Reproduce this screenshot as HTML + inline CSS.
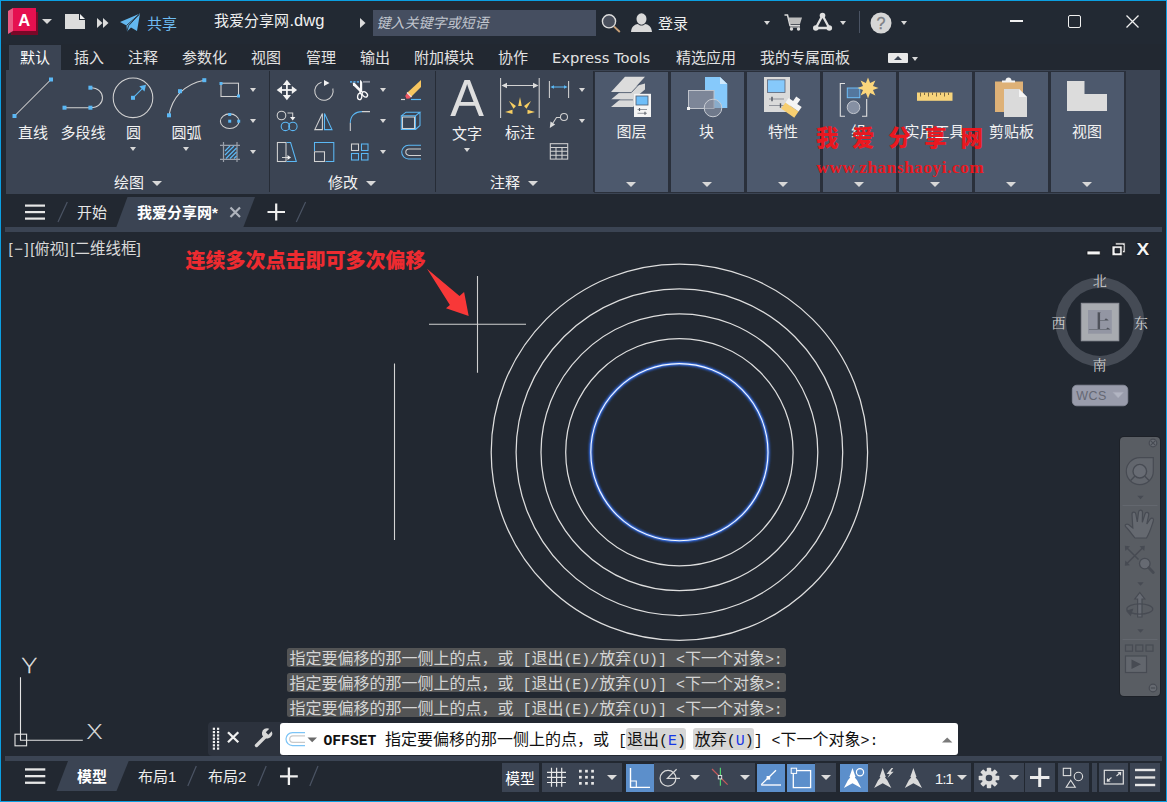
<!DOCTYPE html>
<html lang="zh-CN">
<head>
<meta charset="utf-8">
<title>AutoCAD</title>
<style>
*{box-sizing:border-box;margin:0;padding:0}
html,body{width:1167px;height:802px;overflow:hidden;background:#222831}
body{font-family:"Liberation Sans","Noto Sans CJK SC",sans-serif;color:#e6e6e6;font-size:15px;position:relative}
.abs{position:absolute}
.t{position:absolute;white-space:nowrap;line-height:1}
#win{position:absolute;left:0;top:0;width:1167px;height:802px;border:1px solid #0b9fe2;box-shadow:inset -1px -1px 0 #27242b;background:#222831;overflow:hidden}
#root{position:absolute;left:-1px;top:-1px;width:1167px;height:802px}
svg{position:absolute;overflow:visible}
.tri{position:absolute;width:0;height:0;border-left:4px solid transparent;border-right:4px solid transparent;border-top:4px solid #d8d8d8}
</style>
</head>
<body>
<div id="win"><div id="root">
<!-- TITLE BAR -->
<div class="abs" id="titlebar" style="left:1px;top:1px;width:1164px;height:43px;background:#222933"></div>
<!-- logo -->
<svg style="left:8px;top:8px" width="31" height="28" viewBox="0 0 31 28">
  <polygon points="3,23 30,23 30,4 28,4 28,23" fill="#7d0a2a"/>
  <polygon points="3,23 3,27 30,27 30,4 28,4 28,23" fill="#7a0828"/>
  <polygon points="0,3 5,0 5,23 0,26" fill="#ea5a84"/>
  <rect x="5" y="0" width="23" height="23" fill="#e5104f"/>
  <text x="16.300" y="17.800" font-family="Liberation Sans, sans-serif" font-weight="bold" font-size="16.500" fill="#fff" text-anchor="middle">A</text>
</svg>
<div class="tri" style="left:42px;top:19px;border-left-width:5px;border-right-width:5px;border-top-width:5px"></div>
<!-- doc icon -->
<svg style="left:65px;top:14px" width="20" height="15" viewBox="0 0 20 15">
  <polygon points="0,0 14,0 14,6 20,6 20,15 0,15" fill="#dcdcdc"/>
  <polygon points="15,0 20,5 15,5" fill="#f2f2f2"/>
</svg>
<svg style="left:97px;top:18px" width="12" height="10" viewBox="0 0 12 10">
  <polygon points="0,0 5.5,5 0,10" fill="#dcdcdc"/><polygon points="6,0 11.5,5 6,10" fill="#dcdcdc"/>
</svg>
<!-- share -->
<svg style="left:120px;top:13px" width="21" height="19" viewBox="0 0 21 19">
  <polygon points="0,9 20,0.5 17,18 11,14.5 7,18.5 6.5,12.5" fill="#63b7ef"/>
  <polyline points="6.5,12.500 19,1.500" stroke="#222933" stroke-width="0.9" fill="none"/>
  <polyline points="7,18 8.500,12.800 19.500,1" stroke="#222933" stroke-width="0.9" fill="none"/>
</svg>
<div class="t" style="left:147px;top:16px;font-size:15px;color:#6ebcf2">共享</div>
<div class="t" style="left:214px;top:12px;font-size:15px;color:#f0f0f0">我爱分享网<span style="font-size:16.500px;margin-left:0.500px">.dwg</span></div>
<svg style="left:360px;top:18px" width="6" height="10" viewBox="0 0 6 10"><polygon points="0,0 5.5,5 0,10" fill="#dcdcdc"/></svg>
<!-- search box -->
<div class="abs" style="left:373px;top:10px;width:223px;height:26px;background:#454e60"></div>
<div class="t" style="left:376.500px;top:15.500px;font-size:14px;color:#c0c5ce;font-style:italic">键入关键字或短语</div>
<!-- search icon -->
<svg style="left:600px;top:13px" width="21" height="20" viewBox="0 0 21 20">
  <circle cx="9" cy="8.300" r="6.600" fill="#494f5c" stroke="#dcdcdc" stroke-width="1.400"/>
  <line x1="14" y1="13.500" x2="19.800" y2="19" stroke="#c9a178" stroke-width="1.800"/>
</svg>
<!-- person -->
<svg style="left:631px;top:13px" width="21" height="19" viewBox="0 0 21 19">
  <ellipse cx="10.500" cy="6" rx="5" ry="5.800" fill="#d9d9d9"/>
  <path d="M0,19 C0.500,13 4,11.500 7,11 C9,13 12,13 14,11 C17,11.500 20.500,13 21,19 Z" fill="#d9d9d9"/>
</svg>
<div class="t" style="left:658px;top:16px;font-size:15px;color:#f0f0f0">登录</div>
<div class="tri" style="left:763.700px;top:20.800px;border-left-width:3.500px;border-right-width:3.500px;border-top-width:4.400px"></div>
<!-- cart -->
<svg style="left:784px;top:14px" width="19" height="18" viewBox="0 0 19 18">
  <path d="M0.500,1 H3.500 L6,11.500 H16" stroke="#d9d9d9" stroke-width="1.500" fill="none"/>
  <polygon points="4.500,3.500 18,3.500 16,10 6,10" fill="#bdbdbd"/>
  <circle cx="7.500" cy="15" r="1.700" fill="#d9d9d9"/><circle cx="14.500" cy="15" r="1.700" fill="#d9d9d9"/>
  <line x1="6" y1="13" x2="16" y2="13" stroke="#d9d9d9" stroke-width="1"/>
</svg>
<!-- A triangle -->
<svg style="left:811px;top:12px" width="23" height="20" viewBox="0 0 23 20">
  <polygon points="11.500,3.500 4.800,16 18.300,16" fill="none" stroke="#e0e0e0" stroke-width="2.300" stroke-linejoin="round"/>
  <circle cx="11.500" cy="3.500" r="2.800" fill="#e0e0e0"/><circle cx="4.800" cy="16" r="2.800" fill="#e0e0e0"/><circle cx="18.300" cy="16" r="2.800" fill="#e0e0e0"/>
</svg>
<div class="tri" style="left:840.300px;top:20.800px;border-left-width:3.500px;border-right-width:3.500px;border-top-width:4.400px"></div>
<div class="abs" style="left:859px;top:11px;width:1px;height:22px;background:#4a5363"></div>
<!-- help -->
<svg style="left:870px;top:11.500px" width="22" height="22" viewBox="0 0 22 22">
  <circle cx="11" cy="11" r="10.500" fill="#d6d6d6"/>
  <text x="11" y="16.500" font-family="Liberation Sans, sans-serif" font-size="16" fill="#7c7e85" stroke="#7c7e85" stroke-width="0.300" text-anchor="middle">?</text>
</svg>
<div class="tri" style="left:901.300px;top:20.800px;border-left-width:3.500px;border-right-width:3.500px;border-top-width:4.400px"></div>
<!-- window controls -->
<div class="abs" style="left:1010px;top:20px;width:13px;height:2px;background:#f0f0f0"></div>
<div class="abs" style="left:1068px;top:15px;width:13px;height:13px;border:1.500px solid #f0f0f0;border-radius:2px"></div>
<svg style="left:1126px;top:15px" width="13" height="13" viewBox="0 0 13 13"><path d="M0.500,0.500 L12.500,12.500 M12.500,0.500 L0.500,12.500" stroke="#f0f0f0" stroke-width="1.300"/></svg>
<!-- RIBBON TABS -->
<style>
.rt{position:absolute;top:49px;font-size:15px;line-height:17px;color:#e2e2e2;white-space:nowrap}
.lbl{position:absolute;font-size:15px;line-height:17px;color:#f2f2f2;white-space:nowrap;transform:translateX(-50%)}
.cp{position:absolute;top:72px;width:73px;height:119.700px;background:#4d596d}
.g{stroke:#d2d2d2;fill:none;stroke-width:1.050}
.b{stroke:#5bb8f5;fill:none;stroke-width:1.050}
.h{fill:#5bb8f5}
</style>
<div class="abs" style="left:9px;top:44.600px;width:52px;height:26px;background:#3b4453"></div>
<div class="rt" style="left:20px;color:#fff">默认</div>
<div class="rt" style="left:74px">插入</div>
<div class="rt" style="left:128px">注释</div>
<div class="rt" style="left:182px">参数化</div>
<div class="rt" style="left:251px">视图</div>
<div class="rt" style="left:306px">管理</div>
<div class="rt" style="left:360px">输出</div>
<div class="rt" style="left:414px">附加模块</div>
<div class="rt" style="left:498px">协作</div>
<div class="rt" style="left:552px;font-family:'DejaVu Sans','Liberation Sans',sans-serif;font-size:14.700px">Express Tools</div>
<div class="rt" style="left:676px">精选应用</div>
<div class="rt" style="left:760px">我的专属面板</div>
<div class="abs" style="left:888px;top:53px;width:20px;height:10px;background:#e8e8e8;border-radius:1px"></div>
<div class="abs" style="left:894px;top:56px;width:0;height:0;border-left:4px solid transparent;border-right:4px solid transparent;border-bottom:4px solid #3b4453"></div>
<div class="tri" style="left:912px;top:57px;border-left-width:3.500px;border-right-width:3.500px"></div>

<!-- RIBBON PANEL BG -->
<div class="abs" style="left:6px;top:70px;width:1154px;height:123.500px;background:#3b4453"></div>
<div class="abs" style="left:269px;top:71px;width:1px;height:121px;background:#262c36"></div>
<div class="abs" style="left:435px;top:71px;width:1px;height:121px;background:#262c36"></div>
<div class="abs" style="left:593px;top:71px;width:1px;height:121px;background:#262c36"></div>

<!-- DRAW PANEL -->
<svg style="left:0;top:0" width="270" height="194" viewBox="0 0 270 194">
  <!-- line -->
  <line class="g" x1="14.500" y1="116" x2="51" y2="79.500"/>
  <rect class="h" x="12.500" y="114" width="4" height="4"/><rect class="h" x="49" y="77.500" width="4" height="4"/>
  <!-- polyline -->
  <path class="g" d="M64.500,107.700 H90.400 C106.500,107.700 106.500,87.700 90.400,87.700"/>
  <rect class="h" x="62.500" y="105.700" width="4" height="4"/><rect class="h" x="88.400" y="105.700" width="4" height="4"/><rect class="h" x="88.400" y="85.700" width="4" height="4"/>
  <!-- circle -->
  <circle class="g" cx="133" cy="97.800" r="19.800"/>
  <line class="b" x1="133" y1="97.800" x2="143" y2="87.800" stroke-width="1.400"/>
  <polygon class="h" points="146,84.800 144.500,91.500 139.300,86.300"/>
  <rect class="h" x="131" y="95.800" width="4" height="4"/>
  <!-- arc -->
  <path class="g" d="M169,115.300 C172,98 184,84 204.300,80.200"/>
  <rect class="h" x="167" y="113.300" width="4" height="4"/><rect class="h" x="178" y="89.200" width="4" height="4"/><rect class="h" x="202.300" y="78.200" width="4" height="4"/>
  <!-- rectangle -->
  <rect class="g" x="221" y="83.200" width="17.500" height="13.300"/>
  <rect class="h" x="219.500" y="82" width="3" height="3"/><rect class="h" x="237" y="94.500" width="3" height="3"/>
  <!-- ellipse -->
  <ellipse class="g" cx="229.700" cy="121.200" rx="9.300" ry="7.300"/>
  <rect class="h" x="228.200" y="113" width="3" height="3"/><rect class="h" x="228.200" y="119.700" width="3" height="3"/><rect class="h" x="237.200" y="119.700" width="3" height="3"/>
  <!-- hatch -->
  <path d="M220,145.300 H240 M220,159.300 H240 M223.500,142 V162 M237,142 V162" stroke="#9aa0aa" stroke-width="1.200" fill="none"/>
  <path d="M225,151 L230,146 M225,155 L234,146 M226,158.500 L236.500,148 M230,158.500 L236.500,152 M234,158.500 L236.500,156" stroke="#5bb8f5" stroke-width="1.200" fill="none"/>
</svg>
<div class="lbl" style="left:33px;top:124px">直线</div>
<div class="lbl" style="left:83px;top:124px">多段线</div>
<div class="lbl" style="left:133.500px;top:124px">圆</div>
<div class="lbl" style="left:186.500px;top:124px">圆弧</div>
<div class="tri" style="left:130px;top:147px;border-left-width:3.500px;border-right-width:3.500px"></div>
<div class="tri" style="left:182.500px;top:147px;border-left-width:3.500px;border-right-width:3.500px"></div>
<div class="tri" style="left:250px;top:88px;border-left-width:3.500px;border-right-width:3.500px"></div>
<div class="tri" style="left:250px;top:119px;border-left-width:3.500px;border-right-width:3.500px"></div>
<div class="tri" style="left:250px;top:150px;border-left-width:3.500px;border-right-width:3.500px"></div>
<div class="lbl" style="left:129px;top:174px">绘图</div>
<div class="tri" style="left:151.700px;top:180.700px;border-left-width:5.200px;border-right-width:5.200px;border-top-width:5.500px"></div>
<!-- MODIFY PANEL -->
<svg style="left:0;top:0" width="440" height="194" viewBox="0 0 440 194">
  <!-- move -->
  <g fill="#f2f2f2" stroke="none">
    <rect x="286" y="83" width="1.800" height="14"/><rect x="280" y="89.100" width="14" height="1.800"/>
    <polygon points="286.900,79.800 291,85 282.800,85"/><polygon points="286.900,100.200 291,95 282.800,95"/>
    <polygon points="276.700,90 282,85.900 282,94.100"/><polygon points="297.100,90 291.800,85.900 291.800,94.100"/>
  </g>
  <!-- rotate -->
  <path class="g" d="M321.500,82.200 A9.200,9.200 0 1 0 332.800,88.500" stroke-width="1.300"/>
  <polygon points="324,80 329.500,83 324,86" fill="#f2f2f2"/>
  <!-- copy -->
  <circle class="g" cx="281.500" cy="115.500" r="4.300"/>
  <path class="g" d="M287.500,113 H292.700 V117"/><polygon points="290,117 295.400,117 292.700,120.500" fill="#f2f2f2"/>
  <circle class="b" cx="285.400" cy="126.400" r="4.200"/><circle class="b" cx="292.900" cy="126.400" r="4.200"/>
  <!-- mirror -->
  <polygon class="g" points="314.800,129.600 322.400,129.600 322.400,113.500"/>
  <polygon class="b" points="324.500,113.500 324.500,129.600 332,129.600"/>
  <!-- stretch -->
  <rect class="g" x="277.400" y="142.500" width="8.600" height="19"/>
  <path class="b" d="M286.600,142.500 H290.600 L296.300,161.500 H286.600"/>
  <path class="g" d="M282,157.500 H288"/><polygon points="287.500,155 291,157.500 287.500,160" fill="#f2f2f2"/>
  <!-- scale -->
  <path class="b" d="M325.500,161.500 H333.800 V142.500 H314.500 V151"/>
  <rect class="g" x="314.500" y="151.800" width="10" height="9.700"/>
  <!-- trim -->
  <path d="M350,81.800 H359.200" stroke="#4f9ad2" stroke-width="1.800" stroke-dasharray="2.200,1.200" fill="none"/>
  <path d="M363,81.800 H370" stroke="#8d919c" stroke-width="1.800" fill="none"/>
  <polygon points="360.400,79.800 362.200,82 362.200,91.500 360,91.500 360,81" fill="#fafafa"/>
  <polygon points="352.800,82.800 354.600,82.800 362,90.500 360.500,92.500 353,85.200" fill="#fafafa"/>
  <ellipse cx="359.700" cy="96.500" rx="2.100" ry="3.100" fill="none" stroke="#fafafa" stroke-width="1.300" transform="rotate(8 359.700 96.500)"/>
  <ellipse cx="364.800" cy="94.400" rx="2.100" ry="3.100" fill="none" stroke="#fafafa" stroke-width="1.300" transform="rotate(-48 364.800 94.400)"/>
  <path d="M360.500,91 L359.800,93.500 M361,91 L362.800,92.500" stroke="#fafafa" stroke-width="1.600" fill="none"/>
  <!-- erase -->
  <polygon points="421,80 421,87 411,97 407,93" fill="#f6c55f"/>
  <polygon points="407.500,92.500 411.500,96.500 409.500,98.500 406.500,98.800 405.200,96 " fill="#ee5560"/>
  <path d="M407,92.500 L411.500,97" stroke="#f4e6e0" stroke-width="1.200"/>
  <path d="M401,99.500 H405" stroke="#d6d6d6" stroke-width="1.200"/><path d="M411,99.500 H421" stroke="#5bb8f5" stroke-width="1.200"/>
  <!-- fillet -->
  <path class="b" d="M350.300,123 C350.300,116 355,111.600 362,111.600"/>
  <path class="g" d="M362,111.600 H370 M350.300,123 V131"/>
  <!-- box -->
  <rect class="g" x="402.500" y="117" width="12" height="11.500" stroke="#b8b8b8"/>
  <path class="b" d="M401.300,129.500 V115.800 H415.500 V129.500 Z M401.300,115.800 L406,112.200 H420 L415.500,115.800 M420,112.200 V125.500 L415.500,129.500"/>
  <!-- array -->
  <rect x="351.500" y="144" width="7" height="6.500" class="g" stroke="#b8b8b8"/>
  <rect x="361.500" y="144" width="6.500" height="6.500" class="b"/>
  <rect x="351.500" y="153.500" width="7" height="6.500" class="b"/>
  <rect x="361.500" y="153.500" width="6.500" height="6.500" class="b"/>
  <!-- offset -->
  <path class="b" d="M421,145.300 H408.500 A6.800,6.800 0 0 0 408.500,158.900 H421"/>
  <path class="g" d="M421,149 H409 A3.200,3.200 0 0 0 409,155.400 H421" stroke="#c8c8c8"/>
</svg>
<div class="tri" style="left:380px;top:88px;border-left-width:3.500px;border-right-width:3.500px"></div>
<div class="tri" style="left:380px;top:119px;border-left-width:3.500px;border-right-width:3.500px"></div>
<div class="tri" style="left:380px;top:150px;border-left-width:3.500px;border-right-width:3.500px"></div>
<div class="lbl" style="left:343px;top:174px">修改</div>
<div class="tri" style="left:366px;top:180.700px;border-left-width:5.200px;border-right-width:5.200px;border-top-width:5.500px"></div>
<!-- ANNOTATE PANEL -->
<div class="t" style="left:450.300px;top:72.700px;font-size:51.500px;line-height:51.500px;transform:scaleX(0.98);transform-origin:50% 50%;color:#dedede;font-family:'Liberation Sans',sans-serif">A</div>
<svg style="left:0;top:0" width="600" height="194" viewBox="0 0 600 194">
  <!-- dimension -->
  <path class="g" d="M500.600,78 V118 M539.200,78 V118 M503,85.500 H537"/>
  <polygon points="501.500,85.500 507,82.800 507,88.200" fill="#dcdcdc"/><polygon points="538.500,85.500 533,82.800 533,88.200" fill="#dcdcdc"/>
  <g fill="#f8cf62">
    <polygon points="520,97 521.800,106 518.200,106"/>
    <polygon points="509,101 516,106 513.500,108.800"/>
    <polygon points="531,101 524,106 526.500,108.800"/>
    <polygon points="505,112 512.500,109.800 512.500,114"/>
    <polygon points="535,112 527.500,109.800 527.500,114"/>
  </g>
  <!-- linear dim -->
  <path class="g" d="M549.400,81 V98 M568.600,81 V98"/>
  <path class="b" d="M552,87 H566"/>
  <polygon class="h" points="550.400,87 554,85.200 554,88.800"/><polygon class="h" points="567.600,87 564,85.200 564,88.800"/>
  <!-- leader -->
  <circle class="g" cx="564" cy="117" r="3.500"/>
  <path class="g" d="M560.500,117.500 H556.500 L552,124.500"/>
  <polygon points="549.800,128 550.500,121.500 555.200,124.500" fill="#dcdcdc"/>
  <!-- table -->
  <rect x="550.300" y="143.700" width="17.400" height="15.400" class="g"/>
  <path class="g" d="M550.300,147.500 H567.700 M550.300,151.300 H567.700 M550.300,155.200 H567.700 M556,147.500 V159 M562,147.500 V159"/>
</svg>
<div class="lbl" style="left:467px;top:125px">文字</div>
<div class="lbl" style="left:520px;top:124px">标注</div>
<div class="tri" style="left:463.500px;top:148px;border-left-width:3.500px;border-right-width:3.500px"></div>
<div class="tri" style="left:579px;top:88px;border-left-width:3.500px;border-right-width:3.500px"></div>
<div class="tri" style="left:579px;top:119px;border-left-width:3.500px;border-right-width:3.500px"></div>
<div class="lbl" style="left:505px;top:174px">注释</div>
<div class="tri" style="left:527.700px;top:180.700px;border-left-width:5.200px;border-right-width:5.200px;border-top-width:5.500px"></div>
<!-- COLLAPSED PANELS -->
<div class="abs" style="left:593.500px;top:70.600px;width:532px;height:122.200px;background:#2a303b"></div>
<div class="cp" style="left:595px"></div>
<div class="cp" style="left:671px"></div>
<div class="cp" style="left:747px"></div>
<div class="cp" style="left:823px"></div>
<div class="cp" style="left:899px"></div>
<div class="cp" style="left:975px"></div>
<div class="cp" style="left:1051px"></div>
<svg style="left:0;top:0" width="1167" height="194" viewBox="0 0 1167 194">
  <!-- layers -->
  <polygon points="611,107 623,97 645,97 633,107" fill="#d9d9d9"/>
  <polygon points="611,99.500 623,89.500 645,83.500 645,89.500 633,99.500" fill="#d9d9d9"/>
  <polygon points="611,99.500 633,99.500 633,100.300 611,100.300" fill="#4d596d"/>
  <polygon points="611,92 625,76.800 645,76.800 631,92" fill="#dcdcdc"/>
  <path d="M611,92.600 H631.300 L645,78" stroke="#4d596d" stroke-width="0.900" fill="none"/>
  <rect x="634" y="93.800" width="17" height="23.200" fill="#f4f4f4"/>
  <rect x="636" y="96" width="12" height="9" fill="#6fbef8" stroke="#4d596d" stroke-width="0.800"/>
  <path d="M637.500,109.500 H647 M637.500,113.300 H647" stroke="#7a7f88" stroke-width="0.800"/>
  <path d="M639.500,108 V111 M645,111.800 V114.800" stroke="#5a5f68" stroke-width="1.200"/>
  <!-- block -->
  <polygon points="705,77 720,77 727.300,84 727.300,108 705,108" fill="#86c9fb"/>
  <polygon points="720,77 727.300,84 720,84" fill="#cfe8fb"/>
  <rect x="688.500" y="90.500" width="25.500" height="18" fill="#7d8698" stroke="#bfc3cb" stroke-width="1"/>
  <circle cx="713" cy="108" r="8.800" fill="#8c94a4" fill-opacity="0.550" stroke="#c8ccd3" stroke-width="1"/>
  <rect x="687" y="107" width="3" height="3" fill="#f2f2f2"/>
  <!-- properties -->
  <rect x="764" y="77" width="26" height="35" fill="#dadada"/>
  <rect x="767.500" y="79.800" width="17.500" height="12.700" fill="#86c9fb" stroke="#5b6374" stroke-width="0.800"/>
  <path d="M769,99 H784 M769,105.500 H784" stroke="#7d828c" stroke-width="0.800"/>
  <path d="M772,96.800 V101.200 M780.500,103.300 V107.800" stroke="#4d535e" stroke-width="1.400"/>
  <g transform="rotate(35 792 107)">
    <rect x="784" y="107" width="16" height="7.500" fill="#f7ce70"/>
    <path d="M784,101.500 H789.500 V96 H794.500 V101.500 H800 V107 H784 Z" fill="#f4f4f4"/>
  </g>
  <!-- group -->
  <path d="M845,83.500 H840.300 V116.300 H845 M862,116.300 H866.700 V99" stroke="#e0e0e0" stroke-width="1.100" fill="none"/>
  <rect x="847.300" y="88" width="12.500" height="9.700" fill="#54779e" stroke="#6fbef8" stroke-width="1"/>
  <circle cx="853.500" cy="107.300" r="6.300" fill="#8690a3" stroke="#c2c6ce" stroke-width="1"/>
  <polygon fill="#fbd67c" points="868.0,77.5 870.1,83.0 875.4,80.6 873.0,85.9 878.5,88.0 873.0,90.1 875.4,95.4 870.1,93.0 868.0,98.5 865.9,93.0 860.6,95.4 863.0,90.1 857.5,88.0 863.0,85.9 860.6,80.6 865.9,83.0"/>
  <!-- ruler -->
  <rect x="917" y="92.500" width="35.500" height="8.300" fill="#f7d47c"/>
  <path d="M920.500,92.500 V96.500 M924.500,92.500 V95 M928.500,92.500 V96.500 M932.500,92.500 V95 M936.500,92.500 V96.500 M940.500,92.500 V95 M944.500,92.500 V96.500 M948.500,92.500 V95" stroke="#7b6a45" stroke-width="1"/>
  <!-- clipboard -->
  <rect x="995" y="81.500" width="28" height="30.500" fill="#deb177"/>
  <path d="M1002,82.500 H1015 V80.500 H1011.500 C1011.500,76.500 1005.500,76.500 1005.500,80.500 H1002 Z" fill="#f4f4f4"/>
  <polygon points="1004,89 1019,89 1027,97 1027,117 1004,117" fill="#dadada"/>
  <polygon points="1019,89 1027,97 1019,97" fill="#f4f4f4"/>
  <!-- view -->
  <polygon points="1067,81 1084.500,81 1084.500,94 1107,94 1107,111 1067,111" fill="#dcdcdc"/>
</svg>
<div class="lbl" style="left:631.500px;top:123px">图层</div>
<div class="lbl" style="left:706.500px;top:123px">块</div>
<div class="lbl" style="left:783px;top:123px">特性</div>
<div class="lbl" style="left:858.500px;top:123px">组</div>
<div class="lbl" style="left:934.500px;top:123px">实用工具</div>
<div class="lbl" style="left:1011.500px;top:123px">剪贴板</div>
<div class="lbl" style="left:1087px;top:123px">视图</div>
<div class="tri" style="left:626.2px;top:182.200px;border-left-width:5.300px;border-right-width:5.300px;border-top-width:5.300px"></div>
<div class="tri" style="left:702.2px;top:182.200px;border-left-width:5.300px;border-right-width:5.300px;border-top-width:5.300px"></div>
<div class="tri" style="left:778.2px;top:182.200px;border-left-width:5.300px;border-right-width:5.300px;border-top-width:5.300px"></div>
<div class="tri" style="left:854.2px;top:182.200px;border-left-width:5.300px;border-right-width:5.300px;border-top-width:5.300px"></div>
<div class="tri" style="left:930.2px;top:182.200px;border-left-width:5.300px;border-right-width:5.300px;border-top-width:5.300px"></div>
<div class="tri" style="left:1006.2px;top:182.200px;border-left-width:5.300px;border-right-width:5.300px;border-top-width:5.300px"></div>
<div class="tri" style="left:1082.2px;top:182.200px;border-left-width:5.300px;border-right-width:5.300px;border-top-width:5.300px"></div>
<!-- watermark -->
<div class="t" style="left:816px;top:125px;font-size:22.500px;line-height:23px;font-weight:900;color:#ea1820;letter-spacing:13.600px;font-family:'Noto Sans CJK SC',sans-serif">我爱分享网</div>
<div class="t" style="left:816.500px;top:157.500px;font-size:17px;line-height:20px;font-weight:bold;color:#ea1820;letter-spacing:0.660px;font-family:'Liberation Serif',serif">www.zhanshaoyi.com</div>
<!-- FILE TABS -->
<div class="abs" style="left:5px;top:227px;width:1157px;height:5.300px;background:#3b4453"></div>
<svg style="left:0;top:190px" width="330" height="45" viewBox="0 190 330 45">
  <polygon points="127.500,197 255,197 243,228 116,228" fill="#3b4453"/>
  <rect x="25" y="204.500" width="20" height="2.200" fill="#e6e6e6"/><rect x="25" y="211" width="20" height="2.200" fill="#e6e6e6"/><rect x="25" y="217.500" width="20" height="2.200" fill="#e6e6e6"/>
  <line x1="67.300" y1="202" x2="58" y2="222" stroke="#4b5464" stroke-width="1.200"/>
  <line x1="305.600" y1="202" x2="296.300" y2="222" stroke="#4b5464" stroke-width="1.200"/>
  <path d="M230.500,207.500 L240,217 M240,207.500 L230.500,217" stroke="#aeb3bc" stroke-width="2.200" fill="none"/>
  <path d="M267.500,212 H285 M276.200,203.500 V220.500" stroke="#f0f0f0" stroke-width="2.200" fill="none"/>
</svg>
<div class="t" style="left:77px;top:204px;font-size:15px;line-height:17px;color:#e6e6e6">开始</div>
<div class="t" style="left:137px;top:204px;font-size:15px;line-height:17px;color:#fff;font-weight:bold">我爱分享网*</div>
<!-- CANVAS -->
<div class="t" style="left:8.500px;top:239.600px;font-size:15px;line-height:17px;color:#d9d9d9;letter-spacing:1.500px">[−]</div>
<div class="t" style="left:30.300px;top:239.600px;font-size:15px;line-height:17px;color:#d9d9d9">[俯视]</div>
<div class="t" style="left:70.300px;top:239.600px;font-size:15.500px;line-height:17px;color:#d9d9d9">[二维线框]</div>
<div class="t" style="left:185.500px;top:248px;font-size:20px;line-height:24px;font-weight:900;color:#ee2b30;font-family:'Noto Sans CJK SC',sans-serif">连续多次点击即可多次偏移</div>
<svg style="left:0;top:233px" width="1167" height="525" viewBox="0 233 1167 525">
  <defs><filter id="glow" x="-10%" y="-10%" width="120%" height="120%"><feGaussianBlur stdDeviation="1.300"/></filter></defs>
  <!-- arrow -->
  <polygon points="427,268.700 459.500,296 464.100,292.100 468.700,315.900 446,308.300 449.900,305" fill="#f83838"/>
  <!-- crosshair -->
  <path d="M477.500,276 V372.700 M429,324.300 H526" stroke="#cfcfcf" stroke-width="1.100" fill="none"/>
  <!-- vertical line -->
  <path d="M394.500,363.500 V540" stroke="#d4d4d4" stroke-width="1.100" fill="none"/>
  <!-- circles -->
  <g fill="none" stroke="#dedede" stroke-width="1.250">
    <circle cx="679.400" cy="452.200" r="113.700"/>
    <circle cx="679.400" cy="452.200" r="138.400"/>
    <circle cx="679.400" cy="452.200" r="163.300"/>
    <circle cx="679.400" cy="452.200" r="188.200"/>
  </g>
  <circle cx="679.400" cy="452.200" r="88.600" fill="none" stroke="#2f62d0" stroke-width="3.600" filter="url(#glow)"/>
  <circle cx="679.400" cy="452.200" r="88.600" fill="none" stroke="#3a6edc" stroke-width="2.600" opacity="0.800"/>
  <circle cx="679.400" cy="452.200" r="88.600" fill="none" stroke="#f4f8ff" stroke-width="1.100"/>
  <!-- UCS icon -->
  <text x="29.400" y="672.800" text-anchor="middle" font-family="'Noto Sans CJK SC','DejaVu Sans',sans-serif" font-weight="100" font-size="20" fill="#e8e8e8" stroke="#e8e8e8" stroke-width="0.250" transform="translate(29.400 0) scale(1.52 1) translate(-29.400 0)">Y</text>
  <text x="94.500" y="738.900" text-anchor="middle" font-family="'Noto Sans CJK SC','DejaVu Sans',sans-serif" font-weight="100" font-size="20.600" fill="#e8e8e8" stroke="#e8e8e8" stroke-width="0.250" transform="translate(94.500 0) scale(1.45 1) translate(-94.500 0)">X</text>
  <g fill="none" stroke="#e4e4e4" stroke-width="1.100">
    <path d="M20.500,677.200 V740.300 H82.800"/>
    <rect x="15" y="734.200" width="11.600" height="11.600"/>
  </g>
</svg>
<!-- viewport controls -->
<svg style="left:1080px;top:238px" width="80" height="24" viewBox="1080 238 80 24">
  <g stroke="#15181d" stroke-width="0.800" fill="#f4f4f4">
    <rect x="1087" y="251" width="13.200" height="3.900"/>
    <path d="M1115.300,242.800 H1125.200 V252.800 H1122.200 V250.800 H1123.200 V245 H1115.300 Z" />
    <path d="M1112,245.900 H1122.200 V255.700 H1112 Z M1115,248.400 V252.900 H1119.700 V248.400 Z" fill-rule="evenodd"/>
    <text x="1142.900" y="254.900" text-anchor="middle" font-family="'Liberation Sans',sans-serif" font-weight="bold" font-size="15.900" paint-order="stroke" stroke-width="1.200" transform="translate(1142.900 0) scale(1.2 1) translate(-1142.900 0)">X</text>
  </g>
</svg>
<!-- viewcube -->
<svg style="left:1050px;top:270px" width="110" height="140" viewBox="1050 270 110 140">
  <circle cx="1099.900" cy="322" r="39.150" fill="none" stroke="#454b55" stroke-width="10.500"/>
  <rect x="1081.200" y="303.200" width="37.700" height="37.700" fill="#a8abb0" stroke="#8f929a" stroke-width="0.800"/>
  <rect x="1088" y="310" width="23.800" height="23.700" fill="#9396a3"/>
  <rect x="1072.300" y="385.200" width="55.500" height="20.600" rx="4.500" fill="#999cab" stroke="#8d909e" stroke-width="0.800"/>
  <polygon points="1113,392.300 1123.400,392.300 1118.200,398" fill="#b2b5c2" stroke="#a6a9b7" stroke-width="0.600"/>
</svg>
<div class="t" style="left:1090px;top:311px;font-size:19px;line-height:19px;font-weight:600;color:#4f525b;transform:scaleX(1.22);transform-origin:50% 50%;font-family:'Noto Serif CJK SC','Liberation Serif',serif">上</div>
<div class="t" style="left:1092.700px;top:273px;font-size:14px;line-height:15px;color:#cfcfcf;font-family:'Noto Serif CJK SC','Liberation Serif',serif">北</div>
<div class="t" style="left:1092.500px;top:357px;font-size:14px;line-height:15px;color:#cfcfcf;font-family:'Noto Serif CJK SC','Liberation Serif',serif">南</div>
<div class="t" style="left:1051.500px;top:315px;font-size:14px;line-height:15px;color:#cfcfcf;font-family:'Noto Serif CJK SC','Liberation Serif',serif">西</div>
<div class="t" style="left:1134px;top:315px;font-size:14px;line-height:15px;color:#cfcfcf;font-family:'Noto Serif CJK SC','Liberation Serif',serif">东</div>
<div class="t" style="left:1076.300px;top:390.300px;font-size:12.500px;line-height:13px;color:#656873;letter-spacing:0.400px;font-family:'Liberation Sans',sans-serif">WCS</div>
<!-- navbar -->
<div class="abs" style="left:1120px;top:437px;width:40px;height:259px;background:#595d63;border-radius:4px;box-shadow:0 0 0 1px #1d2128"></div>
<svg style="left:1118px;top:435px" width="46" height="264" viewBox="1118 435 46 264">
  <g fill="none" stroke="#474b53" stroke-width="1.200">
    <circle cx="1153" cy="443" r="3.800" fill="#666a71"/>
    <path d="M1150.800,440.800 L1155.200,445.200 M1155.200,440.800 L1150.800,445.200"/>
    <!-- wheel -->
    <path d="M1139.800,457.700 H1153.300 V471.200 A13.500,13.500 0 1 1 1139.800,457.700 Z" fill="#62666d"/>
    <circle cx="1139.800" cy="471.200" r="6.800" fill="#686c74" stroke-width="1.400"/>
    <path d="M1130.600,480.400 L1135,476 M1149,480.400 L1144.600,476" stroke-width="1.400"/>
    <polygon points="1137.300,495.700 1143.700,495.700 1140.500,499.200" fill="#474b53" stroke="none"/>
    <path d="M1122.500,505.500 H1157.500" stroke="#63676e" stroke-width="1"/>
    <!-- hand -->
    <path d="M1135,538 C1131,533 1128.500,529.500 1125.500,526.500 C1124.300,524.800 1126.500,523.300 1128.500,524.500 L1132.800,528 L1132,514.500 C1131.800,511.500 1135.300,511.300 1135.800,514 L1137.300,522 L1138.500,512.300 C1138.800,509.300 1142.500,509.500 1142.500,512.500 L1142.300,522.300 L1145,514 C1145.800,511.300 1149.200,512 1148.700,515 L1146.800,524 L1150.300,519 C1151.800,517 1154.300,518.500 1153.300,521 C1151.500,526.500 1150,532.500 1146.500,538 Z" fill="#656970"/>
    <!-- zoom extents -->
    <path d="M1126.500,547.500 L1138.500,559.500 M1143,547.500 L1126.500,564" stroke-width="1.500"/>
    <polygon points="1124.800,545.800 1130,546.300 1125.300,551" fill="#474b53" stroke="none"/>
    <polygon points="1144.800,545.800 1139.600,546.300 1144.300,551" fill="#474b53" stroke="none"/>
    <polygon points="1124.800,565.700 1125.300,560.500 1130,565.200" fill="#474b53" stroke="none"/>
    <circle cx="1144.800" cy="563.600" r="5.300" fill="#666a72" stroke-width="1.300"/>
    <path d="M1148.800,567.800 L1153.300,572.500" stroke-width="2.800" stroke-linecap="round"/>
    <polygon points="1137.300,582.300 1143.700,582.300 1140.500,585.800" fill="#474b53" stroke="none"/>
    <!-- orbit -->
    <path d="M1139.800,592.500 L1144.800,599 H1142 V617 H1137.600 V599 H1134.800 Z" fill="#666a72"/>
    <ellipse cx="1139.800" cy="609" rx="13" ry="5.200"/>
    <polygon points="1127,611 1132.500,609.500 1130.500,615" fill="#474b53"/>
    <polygon points="1137.300,629.300 1143.700,629.300 1140.500,632.800" fill="#474b53" stroke="none"/>
    <path d="M1122.500,639.500 H1157.500" stroke="#63676e" stroke-width="1"/>
    <!-- showmotion -->
    <rect x="1125.500" y="645" width="7" height="6.200"/><rect x="1135.800" y="645" width="7" height="6.200"/><rect x="1146" y="645" width="7" height="6.200"/>
    <rect x="1125.500" y="656" width="21" height="16.500" fill="#62666d"/>
    <polygon points="1131.500,659.500 1131.500,669 1141,664.200" fill="#474b53" stroke="none"/>
    <circle cx="1153" cy="688" r="3.800" fill="#666a71"/>
    <path d="M1150.800,688 H1155.200"/>
  </g>
</svg>
<!-- COMMAND HISTORY + LINE -->
<style>
.hist{position:absolute;left:287px;width:499px;height:19px;background:#535455;border-radius:2.500px;color:#d4d4d4;font-size:16px;line-height:24px;white-space:nowrap;padding-left:2.500px;font-family:"Liberation Mono","Noto Sans CJK SC",monospace}
.hist i,.cmdt i{font-style:normal;font-size:14.920px;font-family:"Liberation Mono",monospace}
.cmdt{position:absolute;left:323.500px;top:729px;height:24px;color:#111;font-size:16px;line-height:24px;white-space:nowrap;font-family:"Liberation Mono","Noto Sans CJK SC",monospace}
.cmdt b{font-size:14.670px;font-family:"Liberation Mono",monospace;font-weight:bold}
.cmdt u{text-decoration:none;color:#1737e6;font-size:14.920px;font-family:"Liberation Mono",monospace}
.cmdt .k{background:#d6d6d6;border-radius:3px;padding:3.600px 0.500px 0.100px 0.500px;margin:0 -0.500px}
.cmdt .k2{padding-left:2px;margin-left:-2px;padding-right:0;margin-right:0}
</style>
<div class="hist" style="top:648px">指定要偏移的那一侧上的点，或<i> [</i>退出<i>(E)/</i>放弃<i>(U)] &lt;</i>下一个对象<i>&gt;:</i></div>
<div class="hist" style="top:673px">指定要偏移的那一侧上的点，或<i> [</i>退出<i>(E)/</i>放弃<i>(U)] &lt;</i>下一个对象<i>&gt;:</i></div>
<div class="hist" style="top:698px">指定要偏移的那一侧上的点，或<i> [</i>退出<i>(E)/</i>放弃<i>(U)] &lt;</i>下一个对象<i>&gt;:</i></div>
<div class="abs" style="left:208px;top:722px;width:80px;height:33.500px;background:#2c323d;border-radius:4px 0 0 4px"></div>
<div class="abs" style="left:280px;top:723px;width:677.800px;height:32px;background:#fff;border-radius:3px"></div>
<svg style="left:200px;top:720px" width="130" height="40" viewBox="200 720 130 40">
  <g fill="#f0f0f0"><rect x="212.8" y="727.7" width="2.200" height="2.200"/><rect x="212.8" y="731.0" width="2.200" height="2.200"/><rect x="212.8" y="734.3" width="2.200" height="2.200"/><rect x="212.8" y="737.6" width="2.200" height="2.200"/><rect x="212.8" y="740.9" width="2.200" height="2.200"/><rect x="212.8" y="744.2" width="2.200" height="2.200"/><rect x="212.8" y="747.5" width="2.200" height="2.200"/><rect x="217.0" y="727.7" width="2.200" height="2.200"/><rect x="217.0" y="731.0" width="2.200" height="2.200"/><rect x="217.0" y="734.3" width="2.200" height="2.200"/><rect x="217.0" y="737.6" width="2.200" height="2.200"/><rect x="217.0" y="740.9" width="2.200" height="2.200"/><rect x="217.0" y="744.2" width="2.200" height="2.200"/><rect x="217.0" y="747.5" width="2.200" height="2.200"/></g>
  <path d="M228,732.200 L238.300,742.300 M238.300,732.200 L228,742.300" stroke="#f0f0f0" stroke-width="2.300" fill="none"/>
  <!-- wrench -->
  <path d="M256.500,745.500 L265.500,736.500" stroke="#d8d8d8" stroke-width="3.400" stroke-linecap="round" fill="none"/>
  <path d="M271.800,731.200 L268.300,734.700 L265.800,732.200 L269.300,728.700 A5.200,5.200 0 1 0 271.800,731.200 Z" fill="#d8d8d8"/>
  <!-- offset icon -->
  <path d="M305,732.600 H292.500 A6.500,6.500 0 0 0 292.500,745.600 H305" fill="none" stroke="#7cc4f6" stroke-width="1.200"/>
  <path d="M305,735.800 H293 A3.300,3.300 0 0 0 293,742.400 H305" fill="none" stroke="#c9c9c9" stroke-width="1.200"/>
  <polygon points="307.500,737.500 317,737.500 312.200,742.300" fill="#6a6a6a"/>
</svg>
<div class="cmdt"><b>OFFSET </b>指定要偏移的那一侧上的点，或<i> [</i><span class="k">退出<i>(</i><u>E</u><i>)</i></span><i> </i><span class="k k2">放弃<i>(</i><u>U</u><i>)</i></span><i>] &lt;</i>下一个对象<i>&gt;:</i></div>
<svg style="left:942px;top:737px" width="11" height="6" viewBox="0 0 11 6"><polygon points="0,5.500 10.400,5.500 5.200,0.500" fill="#7a7a7a"/></svg>
<!-- STATUS BAR -->
<div class="abs" style="left:5px;top:755.900px;width:1157px;height:5.200px;background:#3b4453"></div>
<svg style="left:0;top:755px" width="1167" height="47" viewBox="0 755 1167 47">
  <polygon points="68,761 128.700,761 116.500,791 56.600,791" fill="#3b4453"/>
  <rect x="25" y="768.300" width="20.300" height="2.300" fill="#e6e6e6"/><rect x="25" y="775" width="20.300" height="2.300" fill="#e6e6e6"/><rect x="25" y="781.600" width="20.300" height="2.300" fill="#e6e6e6"/>
  <g stroke="#4b5464" stroke-width="1.200">
    <line x1="196.300" y1="766" x2="187.800" y2="786"/><line x1="266.200" y1="766" x2="257.900" y2="786"/><line x1="318" y1="766" x2="309.800" y2="786"/>
  </g>
  <path d="M280,776.300 H297.800 M288.900,767.500 V785" stroke="#f0f0f0" stroke-width="2.300" fill="none"/>
</svg>
<div class="t" style="left:77px;top:768px;font-size:15px;line-height:17px;color:#fff;font-weight:bold">模型</div>
<div class="t" style="left:138px;top:768px;font-size:15px;line-height:17px;color:#ececec">布局1</div>
<div class="t" style="left:208px;top:768px;font-size:15px;line-height:17px;color:#ececec">布局2</div>
<style>
.sb{position:absolute;top:763px;height:29.300px;background:#3b4453}
.sa{position:absolute;top:763.900px;height:28px;background:#5c8fcb}
.stri{position:absolute;top:775px;width:0;height:0;border-left:5px solid transparent;border-right:5px solid transparent;border-top:5px solid #dcdcdc}
</style>
<div class="sb" style="left:501.500px;width:37.500px"></div>
<div class="sb" style="left:542px;width:80px"></div>
<div class="sa" style="left:625.800px;width:28.300px"></div>
<div class="sb" style="left:654px;width:101.200px"></div>
<div class="sa" style="left:756.700px;width:28.300px"></div>
<div class="sa" style="left:787px;width:28px"></div>
<div class="sb" style="left:815px;width:21.300px"></div>
<div class="sa" style="left:840px;width:28px"></div>
<div class="sb" style="left:868px;width:103.300px"></div>
<div class="sb" style="left:974px;width:49.700px"></div>
<div class="sb" style="left:1025px;width:30px"></div>
<div class="sb" style="left:1058px;width:31px"></div>
<div class="sb" style="left:1092px;width:4.500px"></div>
<div class="sb" style="left:1098.900px;width:29.100px"></div>
<div class="sb" style="left:1130px;width:30px"></div>
<div class="t" style="left:505.200px;top:771px;font-size:14.700px;line-height:17px;color:#fff">模型</div>
<div class="stri" style="left:607px"></div>
<div class="stri" style="left:690px"></div>
<div class="stri" style="left:739.800px"></div>
<div class="stri" style="left:820.800px"></div>
<div class="stri" style="left:956.500px"></div>
<div class="stri" style="left:1009px"></div>
<div class="t" style="left:934.800px;top:769.500px;font-size:15.500px;line-height:17px;color:#f2f2f2;letter-spacing:-1.200px">1:1</div>
<svg style="left:495px;top:755px" width="672" height="47" viewBox="495 755 672 47">
  <!-- grid -->
  <path d="M551.500,767.800 V786.700 M556.600,767.800 V786.700 M561.700,767.800 V786.700 M547,772.300 H566 M547,777.400 H566 M547,782.500 H566" stroke="#e8e8e8" stroke-width="1.200" fill="none"/>
  <!-- snap dots -->
  <g fill="#e8e8e8">
    <rect x="579.0" y="769.8" width="2.700" height="2.700"/>
    <rect x="585.1" y="769.8" width="2.700" height="2.700"/>
    <rect x="591.2" y="769.8" width="2.700" height="2.700"/>
    <rect x="579.0" y="775.9" width="2.700" height="2.700"/>
    <rect x="585.1" y="775.9" width="2.700" height="2.700"/>
    <rect x="591.2" y="775.9" width="2.700" height="2.700"/>
    <rect x="579.0" y="782.0" width="2.700" height="2.700"/>
    <rect x="585.1" y="782.0" width="2.700" height="2.700"/>
    <rect x="591.2" y="782.0" width="2.700" height="2.700"/>
  </g>
  <!-- ortho -->
  <path d="M630.500,768 V787.400 H650" stroke="#fff" stroke-width="1.400" fill="none"/>
  <path d="M630.500,781 H636.300 V787.400" stroke="#fff" stroke-width="1.100" fill="none"/>
  <!-- polar -->
  <circle cx="668" cy="778.300" r="7.900" stroke="#d8d8d8" stroke-width="1.200" fill="none"/>
  <path d="M680,778.300 H667.400 L676.600,769.300" stroke="#d8d8d8" stroke-width="1.200" fill="none"/>
  <!-- isodraft -->
  <path d="M720.400,767.800 V785.800" stroke="#4fcf6e" stroke-width="1.200"/>
  <path d="M712,769 L727.600,784.600" stroke="#c65a5c" stroke-width="1.200"/>
  <rect x="718.300" y="775.500" width="3.400" height="3.400" fill="#3b4453" stroke="#e6e6e6" stroke-width="0.900"/>
  <!-- otrack -->
  <path d="M761.200,785 H781" stroke="#e8eef8" stroke-width="1.600" fill="none"/>
  <path d="M761.200,784.600 L776,770.200" stroke="#fff" stroke-width="1.300" fill="none"/>
  <rect x="766.600" y="776" width="3.600" height="3.600" fill="#fff"/>
  <!-- osnap -->
  <rect x="793.300" y="770.600" width="17.300" height="17" fill="none" stroke="#fff" stroke-width="1.300"/>
  <rect x="791.200" y="768.200" width="5.400" height="5.200" fill="#5c8fcb" stroke="#fff" stroke-width="1"/>
  <!-- annotation icons -->
  <path d="M852.5,768.0 L855.1,775.5 L855.6,776.5 L854.8,777.6 L857.1,780.2 L861.1,788.0 L852.5,783.2 L843.9,788.0 L847.9,780.2 L850.2,777.6 L849.4,776.5 L849.9,775.5 Z" fill="#fff"/>
  <circle cx="860" cy="772.300" r="3.600" fill="none" stroke="#fff" stroke-width="1.200"/>
  <path d="M882.7,768.0 L885.3,775.5 L885.8,776.5 L885.0,777.6 L887.3,780.2 L891.3,788.0 L882.7,783.2 L874.1,788.0 L878.1,780.2 L880.4,777.6 L879.6,776.5 L880.1,775.5 Z" fill="#dadada"/>
  <path d="M891.500,768 L886.600,774 H889.600 L887.400,778 L893.600,771.800 H890.700 L893.200,768 Z" fill="#dadada"/>
  <path d="M913.4,768.0 L916.0,775.5 L916.5,776.5 L915.7,777.6 L918.0,780.2 L922.0,788.0 L913.4,783.2 L904.8,788.0 L908.8,780.2 L911.1,777.6 L910.3,776.5 L910.8,775.5 Z" fill="#dadada"/>
  <!-- gear -->
  <g transform="translate(989,778)" fill="#dcdcdc">
    <circle r="7.200"/>
    <g id="teeth"><rect x="-2.200" y="-10.300" width="4.400" height="20.600" rx="0.800"/></g>
    <rect x="-2.200" y="-10.300" width="4.400" height="20.600" rx="0.800" transform="rotate(45)"/>
    <rect x="-2.200" y="-10.300" width="4.400" height="20.600" rx="0.800" transform="rotate(90)"/>
    <rect x="-2.200" y="-10.300" width="4.400" height="20.600" rx="0.800" transform="rotate(135)"/>
    <circle r="3.300" fill="#3b4453"/>
  </g>
  <!-- plus -->
  <path d="M1030,777.400 H1049.400 M1039.700,767.800 V787" stroke="#ececec" stroke-width="3" fill="none"/>
  <!-- shapes -->
  <rect x="1063.300" y="768.300" width="7.400" height="7.300" fill="none" stroke="#e0e0e0" stroke-width="1.100"/>
  <circle cx="1078.400" cy="776.500" r="4.200" fill="none" stroke="#e0e0e0" stroke-width="1.100"/>
  <polygon points="1070.700,780.300 1075.300,787.200 1066.200,787.200" fill="none" stroke="#e0e0e0" stroke-width="1.100"/>
  <!-- fullscreen -->
  <rect x="1104.300" y="770.300" width="19" height="13.700" fill="none" stroke="#e0e0e0" stroke-width="1.200"/>
  <path d="M1107.500,781 L1111.500,777.500 M1116.500,776 L1120.500,772.500" stroke="#e0e0e0" stroke-width="1.100"/>
  <polygon points="1106.800,781.800 1107,778 1110.500,781.500" fill="#e0e0e0"/><polygon points="1121.200,772 1121,775.800 1117.500,772.300" fill="#e0e0e0"/>
  <!-- hamburger -->
  <rect x="1135" y="768.800" width="20.200" height="2.400" fill="#e8e8e8"/><rect x="1135" y="776.300" width="20.200" height="2.400" fill="#e0e0e0"/><rect x="1135" y="783.800" width="20.200" height="2.400" fill="#e8e8e8"/>
</svg>
</div></div>
</body>
</html>
